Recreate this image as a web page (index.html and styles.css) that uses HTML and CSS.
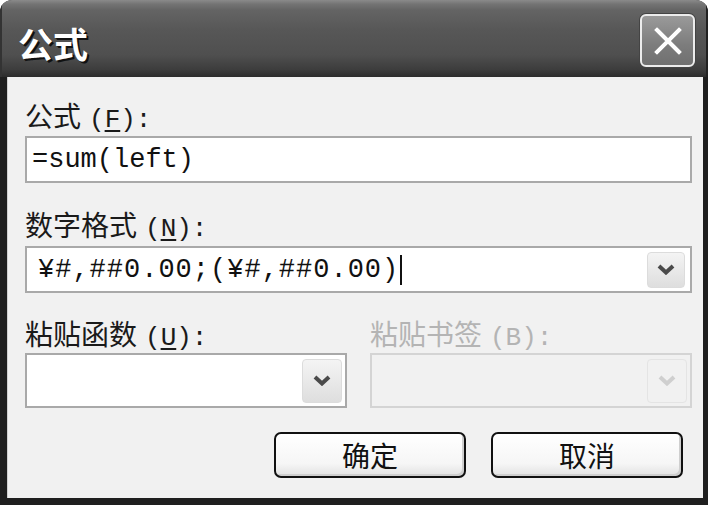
FILE: index.html
```html
<!DOCTYPE html>
<html lang="zh-CN">
<head>
<meta charset="utf-8">
<title>公式</title>
<link rel="stylesheet" href="styles.css">
</head>
<body>
<div class="window">
  <div class="titlebar">
    <span class="title">公式</span>
    <div class="close">
      <svg width="28" height="28" viewBox="0 0 28 28"><path d="M3 3 L25 25 M25 3 L3 25" stroke="#fff" stroke-width="4" stroke-linecap="square" fill="none"/></svg>
    </div>
  </div>
  <div class="body">
    <div class="lbl l1">公式<span class="key">(<u>F</u>):</span></div>
    <div class="field f1"><span class="mono">=sum(left)</span></div>
    <div class="lbl l2">数字格式<span class="key">(<u>N</u>):</span></div>
    <div class="field f2">
      <span class="mono wide">¥#,##0.00;(¥#,##0.00)</span><span class="caret"></span>
      <span class="drop"><svg width="18" height="11" viewBox="0 0 18 11"><path d="M2 2 L9 8.5 L16 2" stroke="#4a4a4a" stroke-width="4" fill="none"/></svg></span>
    </div>
    <div class="pair">
      <div class="col">
        <div class="lbl">粘贴函数<span class="key">(<u>U</u>):</span></div>
        <div class="field f3">
          <span class="drop"><svg width="18" height="11" viewBox="0 0 18 11"><path d="M2 2 L9 8.5 L16 2" stroke="#4a4a4a" stroke-width="4" fill="none"/></svg></span>
        </div>
      </div>
      <div class="col disabled">
        <div class="lbl">粘贴书签<span class="key">(B):</span></div>
        <div class="field f3">
          <span class="drop"><svg width="18" height="11" viewBox="0 0 18 11"><path d="M2 2 L9 8.5 L16 2" stroke="#cfcfcf" stroke-width="4" fill="none"/></svg></span>
        </div>
      </div>
    </div>
    <div class="buttons">
      <button class="btn">确定</button>
      <button class="btn">取消</button>
    </div>
  </div>
</div>
</body>
</html>
```

FILE: styles.css
```css
html, body {
  margin: 0;
  padding: 0;
  background: #ffffff;
}
.window {
  width: 708px;
  height: 505px;
  background: #1f1f1f;
  border-radius: 12px 12px 0 0;
  overflow: hidden;
  display: flex;
  flex-direction: column;
  font-family: "Noto Sans CJK SC", "Noto Sans", sans-serif;
}
.titlebar {
  height: 77px;
  flex: none;
  display: flex;
  justify-content: space-between;
  align-items: flex-start;
  padding: 0 11px 0 16px;
  box-sizing: border-box;
  background: linear-gradient(to bottom, #8a8a8a 0, #747474 4px, #646464 10px, #575757 30px, #4f4f4f 55px, #3c3c3c 70px, #2c2c2c 77px);
  border-left: 2px solid #333;
  border-right: 2px solid #222;
}
.title {
  color: #fff;
  font-size: 35px;
  font-weight: 700;
  line-height: 35px;
  margin-top: 25px;
  text-shadow: 2px 2px 0 #111, 1px 1px 0 #222;
}
.close {
  margin-top: 14px;
  width: 55px;
  height: 53px;
  box-sizing: border-box;
  border: 2px solid #ececec;
  border-radius: 6px;
  background: linear-gradient(to bottom, #9a9a9a, #7c7c7c 60%, #707070);
  box-shadow: 0 0 0 1px #444;
  display: flex;
  align-items: center;
  justify-content: center;
}
.body {
  flex: 1;
  margin: 0 5px 7px 7px;
  background: #f1f1f1;
  padding: 20px 11px 0 18px;
  display: flex;
  flex-direction: column;
  box-shadow: inset 1px 0 0 #d0d0d0;
}
.lbl {
  font-family: "Noto Sans CJK SC", sans-serif;
  font-size: 28px;
  line-height: 36px;
  height: 30px;
  color: #1a1a1a;
  white-space: nowrap;
}
.key {
  font-family: "Liberation Mono", monospace;
  font-size: 26px;
  margin-left: 8px;
}
.lbl u {
  text-underline-offset: 3px;
}
.l2 { margin-top: 23px; }
.field {
  box-sizing: border-box;
  border: 2px solid #a9a9a9;
  background: #fff;
  display: flex;
  align-items: center;
  position: relative;
}
.f1 {
  margin-top: 9px;
  height: 47px;
  padding-left: 5px;
}
.f2 {
  margin-top: 10px;
  height: 47px;
  padding-left: 11px;
}
.mono {
  font-family: "Liberation Mono", "DejaVu Sans Mono", monospace;
  font-size: 27px;
  color: #111;
  white-space: nowrap;
}
.wide {
  letter-spacing: 1px;
}
.caret {
  width: 2px;
  height: 30px;
  background: #111;
  margin-left: 1px;
}
.drop {
  margin-left: auto;
  margin-right: 5px;
  width: 38px;
  height: 36px;
  box-sizing: border-box;
  border: 1px solid #dcdcdc;
  border-radius: 4px;
  background: linear-gradient(to bottom, #f4f4f4, #dedede);
  display: flex;
  align-items: center;
  justify-content: center;
}
.pair {
  margin-top: 22px;
  display: grid;
  grid-template-columns: 322px 322px;
  column-gap: 23px;
}
.col .lbl { margin-bottom: 8px; }
.f3 {
  height: 55px;
}
.f3 .drop {
  width: 40px;
  height: 44px;
  margin-right: 3px;
}
.disabled .lbl { color: #b4b4b4; }
.disabled .field {
  border-color: #d4d4d4;
  background: #f1f1f1;
}
.disabled .drop {
  background: #f1f1f1;
  border-color: #e4e4e4;
}
.buttons {
  margin-top: 24px;
  display: flex;
  justify-content: flex-end;
  gap: 25px;
  padding-right: 9px;
}
.btn {
  width: 192px;
  height: 46px;
  box-sizing: border-box;
  border: 2px solid #111;
  border-radius: 7px;
  background: linear-gradient(to bottom, #ffffff, #f6f6f6 70%, #e2e2e2);
  box-shadow: inset -2px -2px 0 #cfcfcf;
  font-family: "Noto Sans CJK SC", sans-serif;
  font-size: 28px;
  line-height: 40px;
  color: #111;
  padding: 0;
}
```
